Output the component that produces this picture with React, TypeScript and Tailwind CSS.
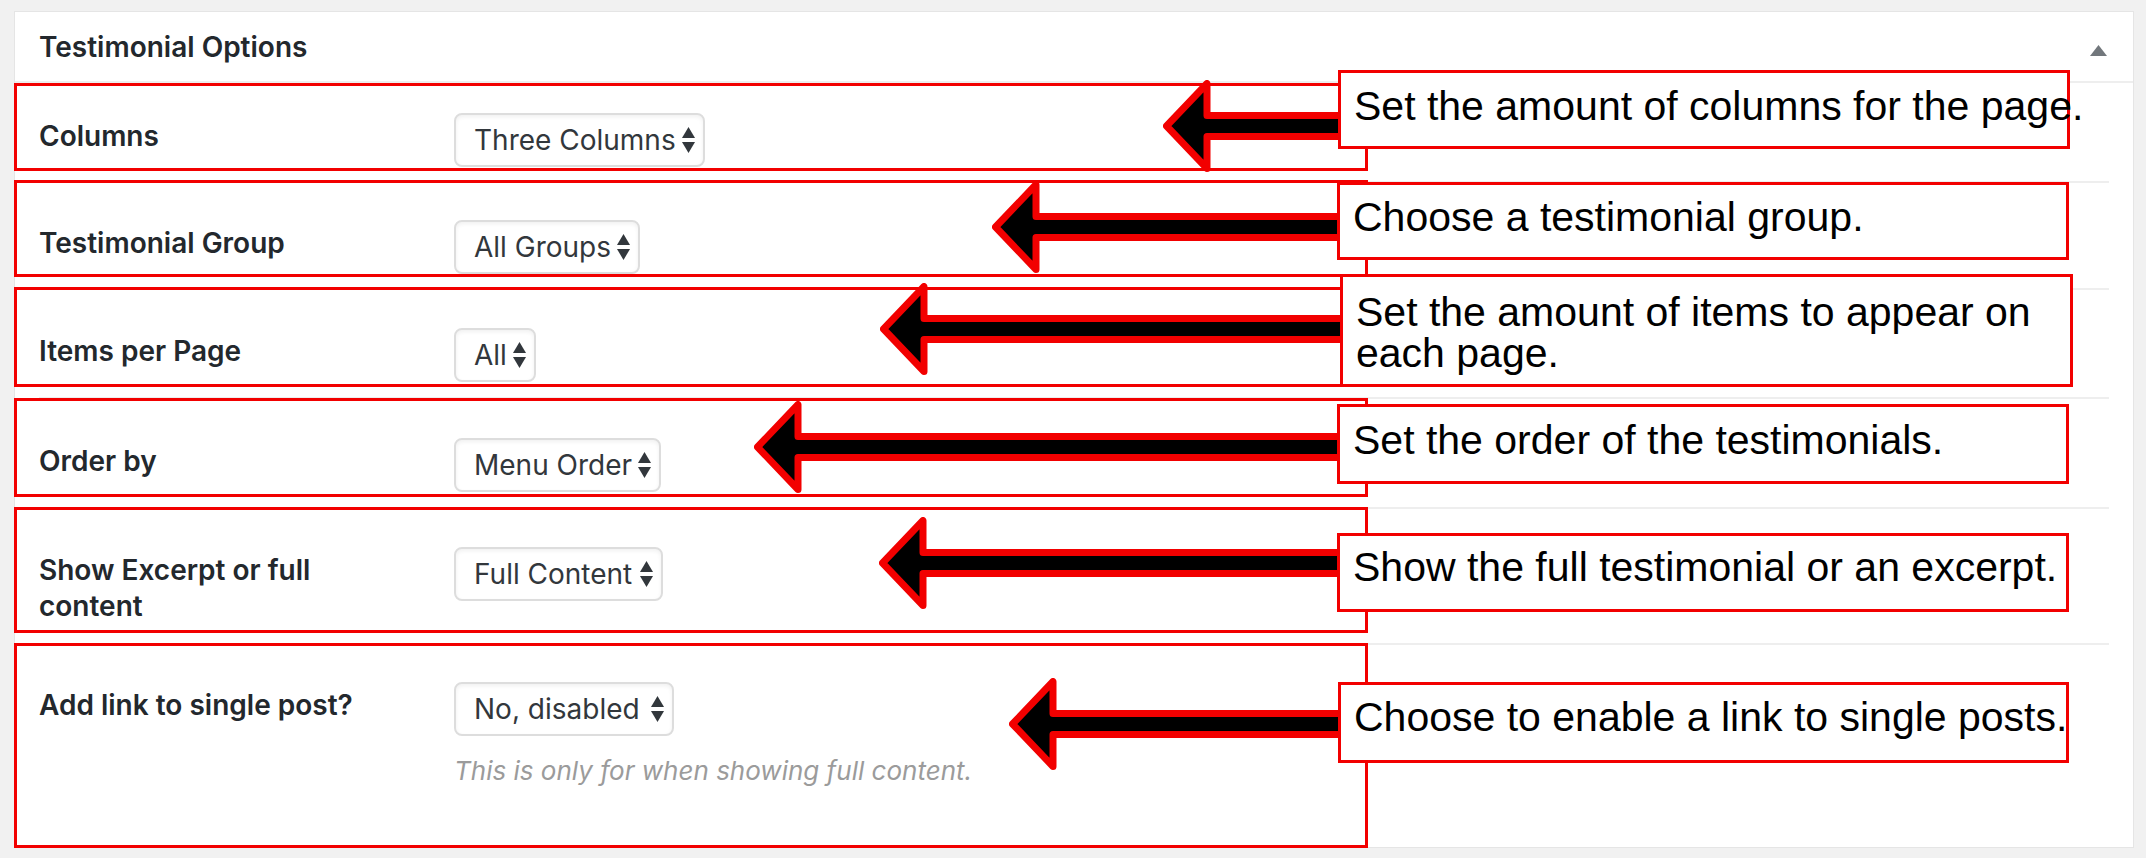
import React from 'react';

const wpFont = { fontFamily: 'Inter, "Noto Sans", sans-serif' };

interface Row {
  label: React.ReactNode;
  value: string;
  row: string;
  select: string;
  note?: string;
}

const rows: Row[] = [
  { label: 'Columns', value: 'Three Columns', row: 'h-[98px] pt-[30px]', select: 'w-[251px]' },
  { label: 'Testimonial Group', value: 'All Groups', row: 'h-[107px] border-t-2 pt-[37px]', select: 'w-[186px]' },
  { label: 'Items per Page', value: 'All', row: 'h-[109px] border-t-2 pt-[38px]', select: 'w-[82px]' },
  { label: 'Order by', value: 'Menu Order', row: 'h-[110px] border-t-2 pt-[39px]', select: 'w-[207px]' },
  {
    label: (
      <>
        Show Excerpt or full
        <br />
        content
      </>
    ),
    value: 'Full Content',
    row: 'h-[136px] border-t-2 pt-[38px]',
    select: 'w-[209px]',
  },
  {
    label: 'Add link to single post?',
    value: 'No, disabled',
    row: 'flex-1 border-t-2 pt-[37px]',
    select: 'w-[220px]',
    note: 'This is only for when showing full content.',
  },
];

// red outlines drawn over each row
const boxes = [
  'top-[83px] h-[88px]',
  'top-[180px] h-[97px]',
  'top-[287px] h-[100px]',
  'top-[398px] h-[99px]',
  'top-[507px] h-[126px]',
  'top-[643px] h-[205px]',
];

// arrow tip x and shaft length
const arrows = [
  { pos: 'left-[1163px] top-[80px]', w: 182 },
  { pos: 'left-[992px] top-[181px]', w: 353 },
  { pos: 'left-[880px] top-[283px]', w: 465 },
  { pos: 'left-[754px] top-[401px]', w: 591 },
  { pos: 'left-[879px] top-[517px]', w: 466 },
  { pos: 'left-[1009px] top-[678px]', w: 336 },
];

const callouts = [
  { pos: 'left-[1338px] top-[70px] w-[732px] h-[79px] pt-[13px]', text: 'Set the amount of columns for the page.' },
  { pos: 'left-[1337px] top-[182px] w-[732px] h-[78px] pt-[12px]', text: 'Choose a testimonial group.' },
  {
    pos: 'left-[1340px] top-[274px] w-[733px] h-[113px] pt-[15px]',
    text: (
      <>
        Set the amount of items to appear on
        <br />
        each page.
      </>
    ),
  },
  { pos: 'left-[1337px] top-[404px] w-[732px] h-[80px] pt-[13px]', text: 'Set the order of the testimonials.' },
  { pos: 'left-[1337px] top-[533px] w-[732px] h-[79px] pt-[11px]', text: 'Show the full testimonial or an excerpt.' },
  { pos: 'left-[1338px] top-[682px] w-[731px] h-[81px] pt-[12px]', text: 'Choose to enable a link to single posts.' },
];

function SelectArrows() {
  return (
    <svg width="13" height="26" viewBox="0 0 13 26">
      <polygon points="0,11 6.5,0 13,11" fill="#32373c" />
      <polygon points="0,15 13,15 6.5,26" fill="#32373c" />
    </svg>
  );
}

function Arrow({ pos, w }: { pos: string; w: number }) {
  return (
    <svg className={`absolute ${pos}`} width={w} height={92} viewBox={`0 0 ${w} 92`}>
      <polygon
        points={`3.5,46 44,3.5 44,35.5 ${w},35.5 ${w},56.5 44,56.5 44,88.5`}
        fill="#000"
        stroke="#f20000"
        strokeWidth={7}
        strokeLinejoin="round"
      />
    </svg>
  );
}

export default function App() {
  return (
    <div className="relative h-[858px] w-[2146px] overflow-hidden bg-[#f1f1f1] pl-[14px] pt-[11px]" style={wpFont}>
      {/* metabox */}
      <div className="flex h-[837px] w-[2120px] flex-col border border-[#e5e5e5] bg-white">
        <div className="flex h-[71px] shrink-0 items-start justify-between border-b-2 border-[#eeeeee] pl-[24px] pr-[26px] pt-[17px]">
          <h2 className="text-[28px] font-semibold leading-[36px] text-[#23282d]">Testimonial Options</h2>
          <svg className="mt-[16px]" width="17" height="11" viewBox="0 0 17 11">
            <polygon points="0,11 8.5,0 17,11" fill="#72777c" />
          </svg>
        </div>

        <div className="flex flex-1 flex-col px-[24px]">
          {rows.map((r, i) => (
            <div key={i} className={`flex shrink-0 items-start border-[#eeeeee] ${r.row}`}>
              <div className="mt-[5px] w-[415px] shrink-0 text-[28px] font-semibold leading-[36px] text-[#23282d]">
                {r.label}
              </div>
              <div className="flex flex-col">
                <div
                  className={`flex h-[54px] items-center justify-between rounded-[8px] border-2 border-[#dddddd] bg-white pl-[18px] pr-[8px] text-[28px] text-[#32373c] shadow-[inset_0_2px_4px_rgba(0,0,0,0.06)] ${r.select}`}
                >
                  <span className="whitespace-nowrap">{r.value}</span>
                  <SelectArrows />
                </div>
                {r.note && (
                  <p className="mt-[18px] whitespace-nowrap text-[26px] italic leading-[34px] text-[#9b9b9b]">{r.note}</p>
                )}
              </div>
            </div>
          ))}
        </div>
      </div>

      {/* annotations */}
      {boxes.map((b, i) => (
        <div key={i} className={`absolute left-[14px] w-[1354px] border-[3px] border-[#f20000] ${b}`} />
      ))}
      {arrows.map((a, i) => (
        <Arrow key={i} pos={a.pos} w={a.w} />
      ))}
      {callouts.map((c, i) => (
        <div
          key={i}
          className={`absolute whitespace-nowrap border-[3px] border-[#f20000] bg-white pl-[13px] text-[41px] leading-[41px] text-black ${c.pos}`}
          style={{ fontFamily: '"Liberation Sans", Arial, sans-serif' }}
        >
          {c.text}
        </div>
      ))}
    </div>
  );
}
